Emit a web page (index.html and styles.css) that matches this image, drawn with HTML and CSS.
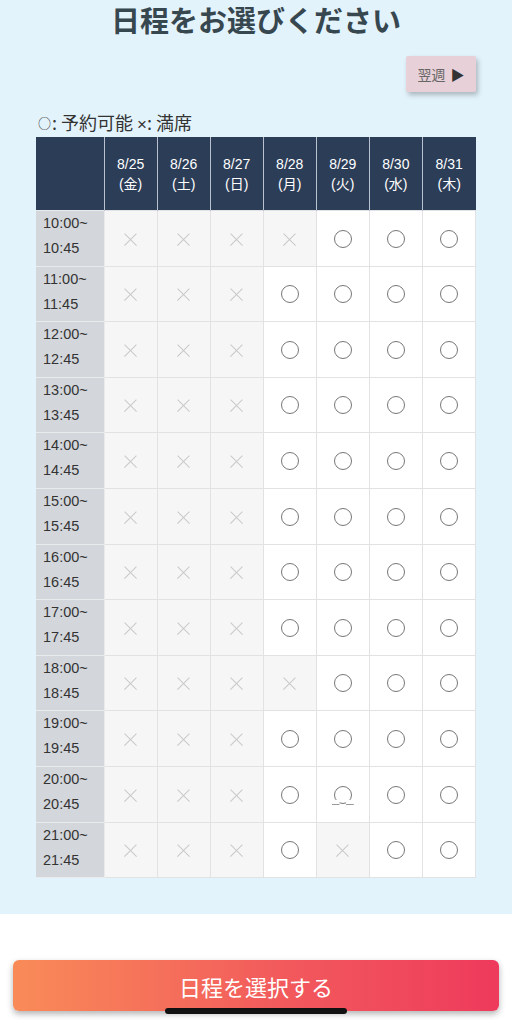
FILE: index.html
```html
<!DOCTYPE html>
<html lang="ja">
<head>
    <meta charset="UTF-8">
    <meta name="viewport" content="width=device-width, initial-scale=1.0">
    <title>日程をお選びください</title>
    <link rel="stylesheet" href="styles.css">
</head>
<body>
    <div class="schedule">
        <h1 class="title">日程をお選びください</h1>
        <div class="nav">
            <button class="next-btn">翌週 <span class="tri">▶</span></button>
        </div>
        <p class="legend"><span class="sym-o">○</span>: 予約可能 <span class="sym-x">×</span>: 満席</p>
        <table class="calendar">
            <colgroup>
                <col class="col-time">
                <col class="col-day"><col class="col-day"><col class="col-day"><col class="col-day">
                <col class="col-day"><col class="col-day"><col class="col-day">
            </colgroup>
            <thead>
                <tr>
                    <th class="corner"></th>
                    <th>8/25<br>(金)</th>
                    <th>8/26<br>(土)</th>
                    <th>8/27<br>(日)</th>
                    <th>8/28<br>(月)</th>
                    <th>8/29<br>(火)</th>
                    <th>8/30<br>(水)</th>
                    <th>8/31<br>(木)</th>
                </tr>
            </thead>
            <tbody id="slots"></tbody>
        </table>
    </div>

    <div class="footer">
        <button class="submit-btn">日程を選択する</button>
        <div class="home-bar"></div>
    </div>

    <script>
        // 1 = 予約可能, 0 = 満席, 2 = 選択中
        const slots = [
            ["10:00", "10:45", [0, 0, 0, 0, 1, 1, 1]],
            ["11:00", "11:45", [0, 0, 0, 1, 1, 1, 1]],
            ["12:00", "12:45", [0, 0, 0, 1, 1, 1, 1]],
            ["13:00", "13:45", [0, 0, 0, 1, 1, 1, 1]],
            ["14:00", "14:45", [0, 0, 0, 1, 1, 1, 1]],
            ["15:00", "15:45", [0, 0, 0, 1, 1, 1, 1]],
            ["16:00", "16:45", [0, 0, 0, 1, 1, 1, 1]],
            ["17:00", "17:45", [0, 0, 0, 1, 1, 1, 1]],
            ["18:00", "18:45", [0, 0, 0, 0, 1, 1, 1]],
            ["19:00", "19:45", [0, 0, 0, 1, 1, 1, 1]],
            ["20:00", "20:45", [0, 0, 0, 1, 2, 1, 1]],
            ["21:00", "21:45", [0, 0, 0, 1, 0, 1, 1]]
        ];

        const body = document.getElementById("slots");
        slots.forEach(([start, end, days]) => {
            let row = `<tr><td class="time">${start}~<br>${end}</td>`;
            days.forEach(d => {
                if (d === 0) {
                    row += `<td class="full"><span class="mark-x"></span></td>`;
                } else if (d === 2) {
                    row += `<td class="open"><span class="mark-o picked"></span></td>`;
                } else {
                    row += `<td class="open"><span class="mark-o"></span></td>`;
                }
            });
            body.innerHTML += row + "</tr>";
        });
    </script>
</body>
</html>
```

FILE: styles.css
```css
body {
    margin: 0;
    font-family: "Liberation Sans", "Noto Sans CJK JP", sans-serif;
    background: #fff;
    color: #333;
}
.schedule {
    background: #e3f3fc;
    padding-bottom: 36px;
}
.title {
    margin: 0;
    font-size: 29px;
    line-height: 38px;
    text-align: center;
    color: #37474f;
    font-weight: bold;
    font-family: "Noto Sans CJK JP", sans-serif;
}
.nav {
    display: flex;
    justify-content: flex-end;
    padding-right: 36px;
    margin-top: 18px;
}
.next-btn {
    width: 70px;
    height: 36px;
    border: none;
    border-radius: 2px;
    background: #e8d0d8;
    color: #666;
    font-size: 14px;
    font-family: "Noto Sans CJK JP", sans-serif;
    box-shadow: 2px 3px 5px rgba(0, 0, 0, 0.25);
    padding: 0;
}
.next-btn .tri {
    color: #333;
    font-size: 14px;
    margin-left: 2px;
}
.legend {
    margin: 20px 0 5px 38px;
    height: 20px;
    font-size: 18px;
    line-height: 20px;
    color: #333;
    font-family: "Noto Sans CJK JP", sans-serif;
}
.legend .sym-o {
    font-size: 13px;
    line-height: 1;
    vertical-align: 2px;
    margin-right: 1px;
}
.legend .sym-x {
    font-family: "Liberation Sans", sans-serif;
    font-size: 17px;
    line-height: 1;
}
.calendar {
    margin-left: 36px;
    width: 440px;
    table-layout: fixed;
    border-collapse: collapse;
}
.col-time {
    width: 68px;
}
.col-day {
    width: 53px;
}
.calendar th {
    background: #2c3d58;
    color: #fff;
    font-weight: normal;
    font-size: 14px;
    line-height: 20px;
    height: 73px;
    padding: 0;
    border-left: 1px solid #b9c2ce;
}
.calendar th.corner {
    border-left: none;
}
.calendar td {
    height: 54.6px;
    padding: 0;
    border: 1px solid #e2e2e2;
    text-align: center;
    vertical-align: middle;
}
.calendar td.time {
    background: #d3d7dc;
    text-align: left;
    vertical-align: top;
    padding-left: 7px;
    font-size: 14.5px;
    line-height: 25px;
    color: #333;
    border-left: none;
    border-color: #e8eaec;
}
.calendar td.full {
    background: #f6f6f6;
}
.calendar td.open {
    background: #fff;
}
.mark-o {
    display: inline-block;
    width: 16px;
    height: 16px;
    border: 1.4px solid #777;
    border-radius: 50%;
    vertical-align: middle;
    position: relative;
}
.mark-o.picked::after {
    content: "";
    position: absolute;
    left: -3px;
    right: -3px;
    bottom: -2px;
    height: 4px;
    border-bottom: 1.5px solid #333;
    background: #fff;
    clip-path: polygon(0 0, 35% 0, 35% 100%, 65% 100%, 65% 0, 100% 0, 100% 100%, 0 100%);
}
.mark-x {
    display: inline-block;
    width: 13px;
    height: 13px;
    position: relative;
    vertical-align: middle;
}
.mark-x::before,
.mark-x::after {
    content: "";
    position: absolute;
    left: -2px;
    right: -2px;
    top: 6px;
    height: 1.3px;
    background: #c8c8c8;
    transform: rotate(45deg);
}
.mark-x::after {
    transform: rotate(-45deg);
}
.footer {
    position: relative;
    padding: 46px 13px 13px;
}
.submit-btn {
    display: block;
    width: 100%;
    height: 51px;
    border: none;
    border-radius: 6px;
    background: linear-gradient(90deg, #f98b58, #f25a5c 55%, #ee3a5c);
    color: #fff;
    font-size: 22px;
    font-family: "Noto Sans CJK JP", sans-serif;
    box-shadow: 0 3px 6px rgba(0, 0, 0, 0.3);
}
.home-bar {
    position: absolute;
    left: 165px;
    top: 94px;
    width: 182px;
    height: 6px;
    border-radius: 3px;
    background: #111;
}
```
